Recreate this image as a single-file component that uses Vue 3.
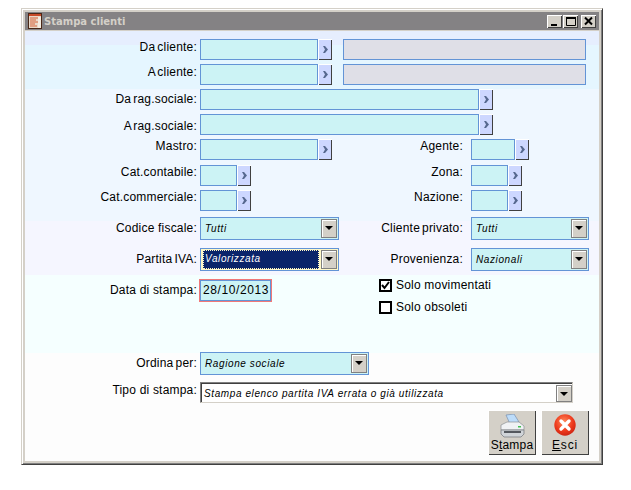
<script setup>
// Maschera "Stampa clienti"
</script>

<template>
  <div class="window">
    <div class="titlebar">
      <svg class="appicon" width="14" height="16" viewBox="0 0 14 16">
        <rect x="0.5" y="0.5" width="13" height="15" fill="#e8d8c8" stroke="#4a2818" />
        <rect x="1" y="1" width="12" height="2" fill="#c84a28" />
        <path d="M2 5h8M2 7h6M2 9h8M2 11h5M2 13h7" stroke="#d8643c" stroke-width="1" />
        <rect x="10" y="4" width="3" height="11" fill="#f4ece0" />
      </svg>
      <span class="title">Stampa clienti</span>
      <div class="winbtns">
        <button class="winbtn">
          <svg width="13" height="11" viewBox="0 0 13 11"><rect x="3" y="8" width="6" height="2" fill="#000" /></svg>
        </button>
        <button class="winbtn">
          <svg width="13" height="11" viewBox="0 0 13 11"><path d="M2.5 1.5h9v8h-9z" fill="none" stroke="#000" /><rect x="2" y="1" width="10" height="2" fill="#000" /></svg>
        </button>
        <button class="winbtn close">
          <svg width="13" height="11" viewBox="0 0 13 11"><path d="M3 1.5l7 7M10 1.5l-7 7" stroke="#000" stroke-width="2" /></svg>
        </button>
      </div>
    </div>

    <div class="body">
      <div class="row">
        <label class="lbl p1 tight">Da cliente:</label>
        <div class="field w118"></div>
        <button class="zoom"><svg width="5" height="7" viewBox="0 0 5 7"><path d="M0 0h2l3 3.5-3 3.5H0l2-3.5z" fill="#56688f" /></svg></button>
        <div class="field gray"></div>
      </div>
      <div class="row">
        <label class="lbl p1 tight">A cliente:</label>
        <div class="field w118"></div>
        <button class="zoom"><svg width="5" height="7" viewBox="0 0 5 7"><path d="M0 0h2l3 3.5-3 3.5H0l2-3.5z" fill="#56688f" /></svg></button>
        <div class="field gray"></div>
      </div>
      <div class="row">
        <label class="lbl p3 tight">Da rag.sociale:</label>
        <div class="field w279"></div>
        <button class="zoom"><svg width="5" height="7" viewBox="0 0 5 7"><path d="M0 0h2l3 3.5-3 3.5H0l2-3.5z" fill="#56688f" /></svg></button>
      </div>
      <div class="row">
        <label class="lbl p5 tight">A rag.sociale:</label>
        <div class="field w279"></div>
        <button class="zoom"><svg width="5" height="7" viewBox="0 0 5 7"><path d="M0 0h2l3 3.5-3 3.5H0l2-3.5z" fill="#56688f" /></svg></button>
      </div>
      <div class="row">
        <div class="col-left">
          <label class="lbl">Mastro:</label>
          <div class="field w118"></div>
          <button class="zoom"><svg width="5" height="7" viewBox="0 0 5 7"><path d="M0 0h2l3 3.5-3 3.5H0l2-3.5z" fill="#56688f" /></svg></button>
        </div>
        <label class="lbl right">Agente:</label>
        <div class="field w44"></div>
        <button class="zoom"><svg width="5" height="7" viewBox="0 0 5 7"><path d="M0 0h2l3 3.5-3 3.5H0l2-3.5z" fill="#56688f" /></svg></button>
      </div>
      <div class="row top1">
        <div class="col-left">
          <label class="lbl">Cat.contabile:</label>
          <div class="field w37"></div>
          <button class="zoom"><svg width="5" height="7" viewBox="0 0 5 7"><path d="M0 0h2l3 3.5-3 3.5H0l2-3.5z" fill="#56688f" /></svg></button>
        </div>
        <label class="lbl right">Zona:</label>
        <div class="field w37"></div>
        <button class="zoom"><svg width="5" height="7" viewBox="0 0 5 7"><path d="M0 0h2l3 3.5-3 3.5H0l2-3.5z" fill="#56688f" /></svg></button>
      </div>
      <div class="row">
        <div class="col-left">
          <label class="lbl">Cat.commerciale:</label>
          <div class="field w37"></div>
          <button class="zoom"><svg width="5" height="7" viewBox="0 0 5 7"><path d="M0 0h2l3 3.5-3 3.5H0l2-3.5z" fill="#56688f" /></svg></button>
        </div>
        <label class="lbl right">Nazione:</label>
        <div class="field w37"></div>
        <button class="zoom"><svg width="5" height="7" viewBox="0 0 5 7"><path d="M0 0h2l3 3.5-3 3.5H0l2-3.5z" fill="#56688f" /></svg></button>
      </div>

      <div class="row tall top2">
        <div class="col-left">
          <label class="lbl p4">Codice fiscale:</label>
          <div class="combo w139"><span class="val">Tutti</span><span class="arrow"></span></div>
        </div>
        <label class="lbl right p4 tight">Cliente privato:</label>
        <div class="combo w118"><span class="val">Tutti</span><span class="arrow"></span></div>
      </div>
      <div class="row tall gap8">
        <div class="col-left">
          <label class="lbl p4 tight">Partita IVA:</label>
          <div class="combo w139 focus"><span class="val sel">Valorizzata</span><span class="arrow"></span></div>
        </div>
        <label class="lbl right p4">Provenienza:</label>
        <div class="combo w118"><span class="val">Nazionali</span><span class="arrow"></span></div>
      </div>

      <div class="row stampa">
        <div class="col-left">
          <label class="lbl p4">Data di stampa:</label>
          <div class="date">28/10/2013</div>
        </div>
        <div class="checks">
          <div class="check"><span class="box">
            <svg width="9" height="9" viewBox="0 0 9 9"><path d="M1 4l2.5 3L8 1" fill="none" stroke="#000" stroke-width="2" /></svg>
          </span>Solo movimentati</div>
          <div class="check"><span class="box"></span>Solo obsoleti</div>
        </div>
      </div>

      <div class="row tall gap7">
        <label class="lbl p4 tight">Ordina per:</label>
        <div class="combo w169"><span class="val">Ragione sociale</span><span class="arrow"></span></div>
      </div>
      <div class="row">
        <label class="lbl p1">Tipo di stampa:</label>
        <div class="sunken"><span class="val">Stampa elenco partita IVA errata o già utilizzata</span><span class="arrow"></span></div>
      </div>

      <div class="actions">
        <button class="action">
          <svg width="26" height="24" viewBox="0 0 26 24">
            <path d="M7 1l8-1 5 8-9 2z" fill="#bcdcfa" stroke="#7890b0" stroke-width="0.7" />
            <path d="M2 11l6-3h12l5 4v4H2z" fill="#f0f2f4" stroke="#8c9094" stroke-width="0.7" />
            <path d="M2 16h23v4l-3 3H5l-3-3z" fill="#d0d4d8" stroke="#70747a" stroke-width="0.7" />
            <rect x="5" y="17" width="17" height="2" fill="#54585e" />
            <rect x="19" y="12" width="3" height="1.5" fill="#40c050" />
          </svg>
          <span class="cap">S<u>t</u>ampa</span>
        </button>
        <button class="action">
          <svg width="22" height="22" viewBox="0 0 22 22">
            <defs>
              <radialGradient id="esci" cx="0.45" cy="0.35" r="0.7">
                <stop offset="0" stop-color="#ff8a5c" />
                <stop offset="0.6" stop-color="#ee3a1c" />
                <stop offset="1" stop-color="#c82010" />
              </radialGradient>
            </defs>
            <circle cx="11" cy="11" r="10.7" fill="url(#esci)" />
            <path d="M7 7l8 8M15 7l-8 8" stroke="#fff" stroke-width="3.4" stroke-linecap="round" />
          </svg>
          <span class="cap esci"><u>E</u>sci</span>
        </button>
      </div>
    </div>
  </div>
</template>

<style>
html, body {
  background: #fff;
}
</style>

<style scoped>
.window {
  box-sizing: border-box;
  width: 582px;
  height: 457px;
  margin: 8px 0 0 21px;
  background: #d4d0c8;
  border: 1px solid;
  border-color: #d4d0c8 #404040 #404040 #d4d0c8;
  box-shadow: inset 1px 1px 0 #fff, inset -1px -1px 0 #808080;
  padding: 3px;
  font-family: "Liberation Sans", Arial, sans-serif;
  font-size: 12px;
  color: #000;
}

.titlebar {
  display: flex;
  align-items: center;
  height: 18px;
  margin-bottom: 1px;
  padding: 0 3px;
  background: #848284;
}

.appicon {
  margin-right: 2px;
}

.title {
  font-family: "DejaVu Sans", sans-serif;
  font-size: 10px;
  font-weight: bold;
  color: #d4d0c8;
}

.winbtns {
  display: flex;
  margin-left: auto;
}

.winbtn {
  display: flex;
  align-items: center;
  justify-content: center;
  width: 15px;
  height: 13px;
  padding: 0;
  margin-left: 1px;
  background: #d4d0c8;
  border: none;
  box-shadow: inset 1px 1px 0 #fff, inset -1px -1px 0 #404040;
}

.winbtn.close {
  margin-left: 3px;
}

.body {
  height: 430px;
  padding: 8px 10px 0 0;
  box-sizing: border-box;
  background: linear-gradient(
    to bottom,
    #e6eefe 0,
    #e6eefe 14px,
    #e5f6ff 14px,
    #e5f6ff 58px,
    #eff7ff 58px,
    #eff7ff 190px,
    #f5f6ff 190px,
    #f5f6ff 244px,
    #f5ffff 244px,
    #f5ffff 322px,
    #fdfdfd 322px
  );
}

.row {
  display: flex;
  height: 21px;
  margin-bottom: 4px;
}

.row.top1 {
  margin-top: 5px;
}

.row.tall {
  height: 23px;
}

.row.top2 {
  margin-top: 6px;
}

.row.gap8 {
  margin-top: 8px;
}

.row.gap7 {
  margin-top: 0;
  margin-bottom: 7px;
}

.row.stampa {
  height: 73px;
  margin-top: 8px;
  margin-bottom: 0;
}

.col-left {
  display: flex;
  width: 315px;
}

.lbl {
  flex: none;
  width: 172px;
  margin-right: 3px;
  line-height: 14px;
  text-align: right;
  letter-spacing: 0.2px;
}

.lbl.tight {
  word-spacing: -1.5px;
}

.lbl.right {
  width: 123px;
  margin-right: 8px;
}

.p1 { padding-top: 1px; }
.p3 { padding-top: 3px; }
.p4 { padding-top: 4px; }
.p5 { padding-top: 5px; }

.field {
  box-sizing: border-box;
  height: 21px;
  background: #ccf3f5;
  border: 1px solid #6394d6;
}

.w37 { width: 37px; }
.w44 { width: 44px; }
.w118 { width: 118px; }
.w139 { width: 139px; }
.w169 { width: 169px; }
.w279 { width: 279px; }

.field.gray {
  width: 243px;
  margin-left: 11px;
  background: #dfdfe7;
}

.zoom {
  display: flex;
  align-items: center;
  justify-content: center;
  width: 14px;
  height: 21px;
  padding: 0;
  background: #cdd7ff;
  border: none;
  box-shadow: inset 1px 1px 0 #fff, inset -1px -1px 0 #404040;
}

.combo {
  box-sizing: border-box;
  display: flex;
  align-items: center;
  height: 23px;
  padding: 1px 1px 1px 2px;
  background: #ccf3f5;
  border: 1px solid #6394d6;
}

.val {
  flex: 1;
  padding-left: 2px;
  font-size: 10px;
  font-style: italic;
  letter-spacing: 0.6px;
  white-space: nowrap;
}

.arrow {
  position: relative;
  flex: none;
  box-sizing: border-box;
  width: 16px;
  height: 19px;
  background: #d4d0c8;
  border: 1px solid #808080;
  box-shadow: inset 1px 1px 0 #fff;
}

.arrow::after {
  content: "";
  position: absolute;
  left: 3px;
  top: 6px;
  border-style: solid;
  border-width: 4px 4px 0;
  border-color: #000 transparent transparent;
}

.combo.focus {
  background: #fff8c8;
}

.val.sel {
  align-self: stretch;
  margin-right: 2px;
  line-height: 17px;
  background: #0a246a;
  color: #fff;
  outline: 1px dotted #fff8c8;
  outline-offset: -1px;
}

.date {
  box-sizing: border-box;
  width: 71px;
  height: 21px;
  margin-top: 1px;
  padding-left: 2px;
  line-height: 19px;
  letter-spacing: 0.6px;
  background: #ccf3f5;
  border: 1px solid #6394d6;
  box-shadow: 0 0 0 1px #f07878;
}

.checks {
  padding-left: 39px;
}

.check {
  display: flex;
  height: 13px;
  margin-bottom: 9px;
  line-height: 13px;
  letter-spacing: 0.2px;
}

.box {
  display: flex;
  align-items: center;
  justify-content: center;
  box-sizing: border-box;
  width: 13px;
  height: 13px;
  margin-right: 4px;
  background: #fff;
  border: 2px solid #000;
}

.sunken {
  box-sizing: border-box;
  display: flex;
  align-items: center;
  width: 373px;
  height: 21px;
  background: #fff;
  border: 1px solid;
  border-color: #808080 #d4d0c8 #d4d0c8 #808080;
  box-shadow: inset 1px 1px 0 #404040;
  padding-left: 1px;
}

.sunken .val {
  padding-top: 2px;
}

.sunken .arrow {
  align-self: flex-end;
  height: 17px;
}

.actions {
  display: flex;
  justify-content: flex-end;
  gap: 5px;
  margin-top: 7px;
}

.action {
  display: flex;
  flex-direction: column;
  align-items: center;
  justify-content: space-between;
  box-sizing: border-box;
  width: 48px;
  height: 45px;
  padding: 4px 0 3px;
  font: 12px "Liberation Sans", Arial, sans-serif;
  letter-spacing: 0.2px;
  background: #d4d0c8;
  border: none;
  box-shadow: inset 1px 1px 0 #fff, inset -1px -1px 0 #404040;
}

.cap {
  line-height: 14px;
}

.cap.esci {
  letter-spacing: 0.8px;
}
</style>
